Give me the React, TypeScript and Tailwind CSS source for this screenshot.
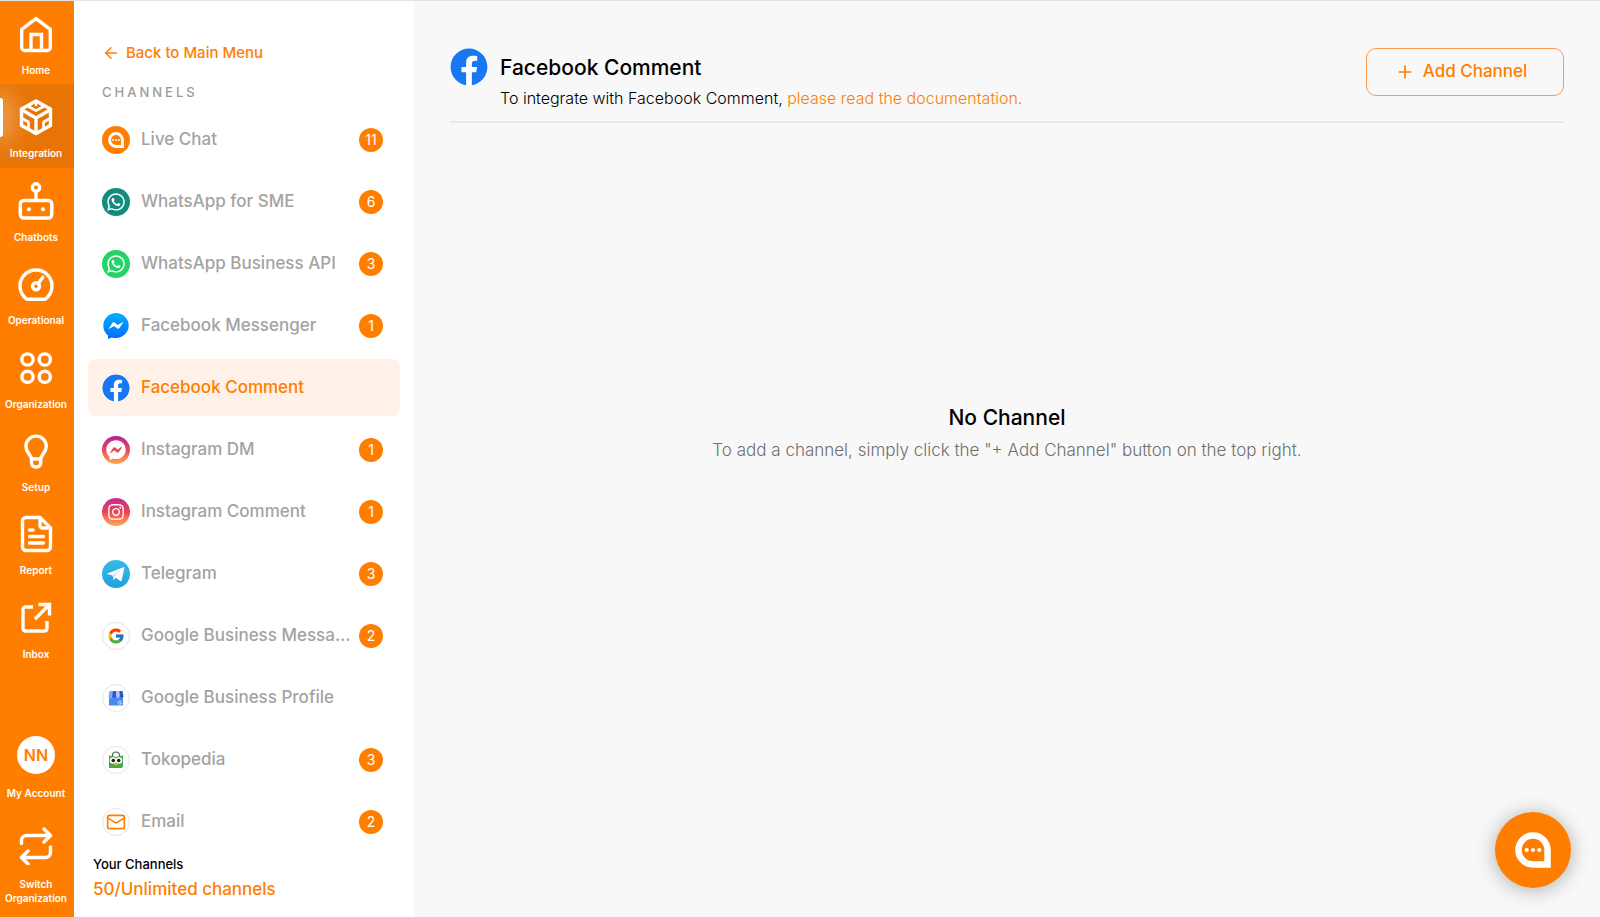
import React from 'react';
import { ArrowLeft, Mail, Plus } from 'lucide-react';
import { FaFacebook, FaFacebookMessenger, FaInstagram, FaWhatsapp } from 'react-icons/fa';
import { FcGoogle } from 'react-icons/fc';

interface IconProps {
    className?: string;
    children: React.ReactNode;
}

// Shared frame for the rail icons: 40x40 grid, white strokes
const RailIcon: React.FC<IconProps> = ({ children }) => (
    <svg
        className="size-10 shrink-0"
        viewBox="0 0 40 40"
        fill="none"
        stroke="currentColor"
        strokeWidth="3.4"
        strokeLinecap="round"
        strokeLinejoin="round"
        aria-hidden="true"
    >
        {children}
    </svg>
);

const HomeIcon = () => (
    <RailIcon>
        <path d="M5.7 15.3 20 4.6l14.3 10.7v18.2a3 3 0 0 1-3 3H8.7a3 3 0 0 1-3-3Z" />
        <path d="M15 36V20.5h10.5V36" strokeLinejoin="miter" />
    </RailIcon>
);

const CubeIcon = () => (
    <RailIcon>
        <path d="M20 4 34.5 12v16.5l-14.5 8-14.5-8V12Z" />
        <path d="M6 13l14 8 14-8M20 21v15.5" />
        <path d="m12.5 9.5 7.5 4.2 7.5-4.2M20 5v3" strokeWidth="2.6" />
        <path d="m6 21.5 6.5 3.5v7M34 21.5 27.5 25v7" strokeWidth="2.6" />
    </RailIcon>
);

const BotIcon = () => (
    <RailIcon>
        <circle cx="20" cy="6.5" r="3.7" />
        <path d="M20 11v8" />
        <rect x="4.3" y="19.5" width="31.5" height="17.5" rx="3.5" />
        <circle cx="13" cy="28.3" r="2" fill="currentColor" stroke="none" />
        <circle cx="27" cy="28.3" r="2" fill="currentColor" stroke="none" />
    </RailIcon>
);

const GaugeIcon = () => (
    <RailIcon>
        <path d="M11 35.3a16 16 0 1 1 18 0Z" />
        <circle cx="20" cy="22.3" r="3.5" />
        <path d="m22.3 19.5 4.5-6.3" />
    </RailIcon>
);

const CirclesIcon = () => (
    <RailIcon>
        <circle cx="11.5" cy="11.5" r="5.6" />
        <circle cx="28.8" cy="11.5" r="5.6" />
        <circle cx="11.5" cy="28.8" r="5.6" />
        <circle cx="28.8" cy="28.8" r="5.6" />
    </RailIcon>
);

const BulbIcon = () => (
    <RailIcon>
        <path d="M15.5 28.5c0-5-5.600-6.500-5.600-13.200a10.200 10.200 0 0 1 20.400 0c0 6.700-5.600 8.200-5.600 13.200v3.500a4 4 0 0 1-4 4h-1.200a4 4 0 0 1-4-4Z" />
        <path d="M15.5 28h9" />
    </RailIcon>
);

const ReportIcon = () => (
    <RailIcon>
        <path d="M24 3.5H10A3.5 3.5 0 0 0 6.500 7v26a3.500 3.500 0 0 0 3.500 3.500h21a3.500 3.500 0 0 0 3.500-3.500V14Z" />
        <path d="M24 4v7.500a2.500 2.500 0 0 0 2.500 2.500H34M13.500 16h3.500M13.500 22.500h14M13.500 29h14" />
    </RailIcon>
);

const ShareIcon = () => (
    <RailIcon>
        <path d="M17 9H9.500A2.500 2.500 0 0 0 7 11.500v19A2.500 2.500 0 0 0 9.500 33h19a2.500 2.500 0 0 0 2.500-2.500V23" strokeLinecap="butt" />
        <path d="M22.5 6.5h11v11M33 7 19 21" strokeLinecap="butt" strokeLinejoin="miter" />
    </RailIcon>
);

const SwitchIcon = () => (
    <RailIcon>
        <path d="M5.5 18.5v-3a5 5 0 0 1 5-5H34M28 4l6.500 6.500L28 17" />
        <path d="M34.5 22v5.500a5 5 0 0 1-5 5H6M12 26l-6.500 6.500L12 39" />
    </RailIcon>
);

const ChatMark: React.FC<{ className: string }> = ({ className }) => (
    <svg className={className} viewBox="0 0 36 36" fill="none" aria-hidden="true">
        <path d="M18 3.5a14.500 14.500 0 0 0 0 29h14.500V18A14.500 14.500 0 0 0 18 3.500Z" stroke="#fff" strokeWidth="6.5" />
        <circle cx="11.7" cy="18" r="2.1" fill="#fff" />
        <circle cx="18" cy="18" r="2.1" fill="#fff" />
        <circle cx="24.3" cy="18" r="2.1" fill="#fff" />
    </svg>
);

const Round: React.FC<IconProps> = ({ className = '', children }) => (
    <span className={`flex size-7 shrink-0 items-center justify-center rounded-full ${className}`}>{children}</span>
);

const FacebookLogo: React.FC<{ className: string }> = ({ className }) => (
    <span className={`flex shrink-0 rounded-full bg-white ${className}`}>
        <FaFacebook className="size-full text-[#1877f2]" />
    </span>
);

const MessengerLogo = () => (
    <Round>
        <svg className="size-[26px]" viewBox="0 0 26 26" aria-hidden="true">
            <defs>
                <linearGradient id="messenger" x1="0" y1="0" x2="0" y2="1">
                    <stop offset="0" stopColor="#00b2ff" />
                    <stop offset="1" stopColor="#006aff" />
                </linearGradient>
            </defs>
            <path d="M13 0a12.700 12.500 0 0 1 0 25c-1.800 0-3-.2-4.200-.6L5 26v-3.600C2 20.200.3 16.800.3 12.500A12.700 12.500 0 0 1 13 0Z" fill="url(#messenger)" />
            <path d="m5.300 16.200 4-6.300q1-1.200 2.300-.3l3 2.300 5.900-3.100-4 6.300q-1 1.200-2.300.3l-3-2.300Z" fill="#fff" />
        </svg>
    </Round>
);

const TelegramLogo = () => (
    <Round className="bg-linear-to-b from-[#37bbe9] to-[#1fa3da]">
        <svg className="size-7" viewBox="0 0 28 28" aria-hidden="true">
            <path d="M5.300 13.600 21.500 7.200q1-.2.800 1l-2.700 12.200q-.4 1.200-1.500.5l-4.200-3.200-2.100 2.300-1.300-4.500-5.200-1.400Z" fill="#fff" />
            <path d="m10.700 15.400 8-5.300-6.400 6.200-.4 3.500Z" fill="#c3dbea" />
        </svg>
    </Round>
);

const ShopLogo = () => (
    <Round className="border border-[#e6e6e6]">
        <svg className="size-4" viewBox="0 0 16 16" aria-hidden="true">
            <path d="M1 6h14v9a.6.6 0 0 1-.6.600H1.600A.6.6 0 0 1 1 15Z" fill="#4989f5" />
            <path d="M1.500 1h3.200v5.500a2 2 0 0 1-4.200 0Z" fill="#7fabf8" />
            <path d="M4.700 1H8v5.500a2 2 0 0 1-3.800 0Z" fill="#2b56c6" />
            <path d="M8 1h3.300l.5 5.500a2 2 0 0 1-3.800 0Z" fill="#a9c6fb" />
            <path d="M11.300 1h3.200l1 5.500a2 2 0 0 1-3.700 0Z" fill="#2b56c6" />
            <path d="M13.200 11.500a1.600 1.600 0 1 0 .4 1.500H12.200" stroke="#fff" strokeWidth=".8" fill="none" />
        </svg>
    </Round>
);

const TokopediaLogo = () => (
    <Round className="border border-[#e6e6e6]">
        <svg className="size-[18px]" viewBox="0 0 18 18" aria-hidden="true">
            <path d="M5.500 5V4a3.500 3 0 0 1 7 0v1" stroke="#555" strokeWidth="1.2" fill="none" />
            <path d="M2 4.500q4 .2 7 1.500 3-1.300 7-1.500V15q0 2-2 2H2Z" fill="#45a849" />
            <circle cx="6" cy="9.5" r="3.2" fill="#fff" />
            <circle cx="12" cy="9.5" r="3.2" fill="#fff" />
            <circle cx="6.3" cy="9.5" r="1.8" fill="#222" />
            <circle cx="11.7" cy="9.5" r="1.8" fill="#222" />
            <path d="m9 11 2 1.900-2 1.900-2-1.900Z" fill="#f7b52c" />
        </svg>
    </Round>
);

const navItems = [
    { label: 'Home', icon: <HomeIcon /> },
    { label: 'Integration', icon: <CubeIcon />, active: true },
    { label: 'Chatbots', icon: <BotIcon /> },
    { label: 'Operational', icon: <GaugeIcon /> },
    { label: 'Organization', icon: <CirclesIcon /> },
    { label: 'Setup', icon: <BulbIcon /> },
    { label: 'Report', icon: <ReportIcon /> },
    { label: 'Inbox', icon: <ShareIcon /> },
];

const channels = [
    { name: 'Live Chat', count: 11, icon: <Round className="bg-[#ff7e00]"><ChatMark className="size-4" /></Round> },
    { name: 'WhatsApp for SME', count: 6, icon: <Round className="bg-[#128c7e]"><FaWhatsapp className="size-5 text-white" /></Round> },
    { name: 'WhatsApp Business API', count: 3, icon: <Round className="bg-[#25d366]"><FaWhatsapp className="size-5 text-white" /></Round> },
    { name: 'Facebook Messenger', count: 1, icon: <MessengerLogo /> },
    { name: 'Facebook Comment', active: true, icon: <FacebookLogo className="size-7" /> },
    {
        name: 'Instagram DM',
        count: 1,
        icon: (
            <Round className="bg-linear-to-b from-[#b5179e] via-[#f0425a] to-[#ffa850]">
                <FaFacebookMessenger className="size-5 text-white" />
            </Round>
        ),
    },
    {
        name: 'Instagram Comment',
        count: 1,
        icon: (
            <Round className="bg-linear-to-b from-[#c22a93] via-[#ee3f52] to-[#ffa850]">
                <FaInstagram className="size-[18px] text-white" />
            </Round>
        ),
    },
    { name: 'Telegram', count: 3, icon: <TelegramLogo /> },
    { name: 'Google Business Messa…', count: 2, icon: <Round className="border border-[#e6e6e6]"><FcGoogle className="size-[18px]" /></Round> },
    { name: 'Google Business Profile', icon: <ShopLogo /> },
    { name: 'Tokopedia', count: 3, icon: <TokopediaLogo /> },
    { name: 'Email', count: 2, icon: <Round className="border border-[#e6e6e6]"><Mail className="size-5 text-[#ff7e00]" /></Round> },
];

const NavRail = () => (
    <nav className="flex w-[74px] shrink-0 flex-col bg-[#ff7e00] text-[10px] leading-[14px] font-semibold text-white">
        <div className="grid h-[667px] grid-rows-8">
            {navItems.map(({ label, icon, active }) => (
                <a
                    key={label}
                    href="#"
                    className={`relative flex flex-col items-center overflow-hidden pt-[13px] pr-[2px] ${active ? 'bg-[#e87405]' : ''}`}
                >
                    {active && (
                        <span className="absolute top-[14px] left-0 h-[39px] w-[3px] rounded-r-sm bg-white shadow-[0_0_24px_4px_rgba(255,255,255,0.7)]" />
                    )}
                    {icon}
                    <span className="mt-[9px]">{label}</span>
                </a>
            ))}
        </div>
        <div className="mt-auto flex flex-col items-center pr-[2px] pb-3 text-center">
            <button className="flex flex-col items-center gap-3">
                <span className="flex size-[38px] items-center justify-center rounded-full bg-white text-base font-semibold text-[#ff7e00]">
                    NN
                </span>
                <span>My Account</span>
            </button>
            <button className="mt-[25px] flex flex-col items-center gap-3">
                <SwitchIcon />
                <span>
                    Switch
                    <br />
                    Organization
                </span>
            </button>
        </div>
    </nav>
);

const ChannelSidebar = () => (
    <aside className="flex w-[340px] shrink-0 flex-col bg-white px-[14px] pt-10">
        <a href="#" className="flex items-center gap-[6px] px-[14px] text-[15px] leading-6 font-medium text-[#ff7e00]">
            <ArrowLeft size={18} strokeWidth={2} />
            Back to Main Menu
        </a>
        <h2 className="mt-[17px] px-[14px] text-[13px] leading-5 font-medium tracking-[3px] text-[#9b9b9b]">CHANNELS</h2>
        <ul className="mt-[9px] flex flex-col gap-[5px]">
            {channels.map(({ name, count, icon, active }) => (
                <li key={name}>
                    <a
                        href="#"
                        className={`flex h-[57px] items-center rounded-lg pr-[17px] pl-[14px] text-[17px] leading-[27px] font-medium ${
                            active ? 'bg-[#fff1e8] text-[#ff7e00]' : 'text-[#a3a3a3]'
                        }`}
                    >
                        {icon}
                        <span className="ml-[11px] flex-1 whitespace-nowrap">{name}</span>
                        {count && (
                            <span className="flex size-6 shrink-0 items-center justify-center rounded-full bg-[#ff7e00] text-sm font-normal text-white">
                                {count}
                            </span>
                        )}
                    </a>
                </li>
            ))}
        </ul>
        <div className="mt-1 px-[5px] font-medium">
            <p className="text-[13px] leading-5 text-black">Your Channels</p>
            <p className="mt-[3px] text-[17px] leading-6 text-[#ff7e00]">50/Unlimited channels</p>
        </div>
    </aside>
);

const App = () => (
    <div className="flex min-h-screen flex-col border-t border-[#e3e3e3] bg-[#f8f8f8] font-['Inter',sans-serif]">
        <div className="flex flex-1">
            <NavRail />
            <ChannelSidebar />
            <main className="flex min-w-0 flex-1 flex-col px-9 pt-[47px]">
                <header className="flex items-start justify-between border-b-2 border-[#e9e9e9] pb-[11px]">
                    <div className="flex gap-3">
                        <FacebookLogo className="size-[38px]" />
                        <div className="pt-[6px]">
                            <h1 className="text-[21px] leading-7 font-medium text-black">Facebook Comment</h1>
                            <p className="mt-1 text-base leading-6 font-light text-black">
                                To integrate with Facebook Comment,{' '}
                                <a href="#" className="text-[#ff7e00]">please read the documentation.</a>
                            </p>
                        </div>
                    </div>
                    <button className="flex h-12 w-[198px] items-center justify-center gap-2 rounded-[10px] border border-[#ff9a4d] pr-2 text-[17px] font-medium text-[#ff7e00]">
                        <Plus size={20} strokeWidth={2} />
                        Add Channel
                    </button>
                </header>
                <section className="mt-[281px] text-center">
                    <h2 className="text-[21px] leading-7 font-medium text-black">No Channel</h2>
                    <p className="mt-1 text-[17px] leading-7 font-light text-[#6f6f6f]">
                        To add a channel, simply click the "+ Add Channel" button on the top right.
                    </p>
                </section>
            </main>
        </div>
        <button
            aria-label="Open chat"
            className="fixed right-[29px] bottom-[29px] flex size-[76px] items-center justify-center rounded-full bg-[#ff7e00] shadow-[0_2px_20px_rgba(0,0,0,0.3)]"
        >
            <ChatMark className="size-9" />
        </button>
    </div>
);

export default App;
